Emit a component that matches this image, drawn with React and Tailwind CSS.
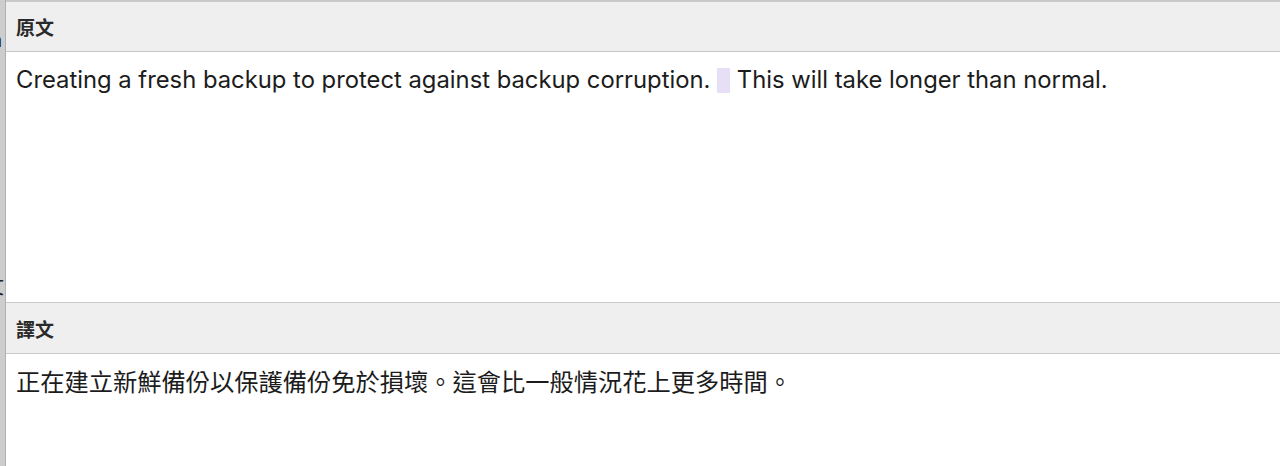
import React from 'react';

const latin = "font-['Inter','Noto_Sans_CJK_TC',sans-serif]";
const cjk = "font-['Noto_Sans_CJK_TC','Noto_Sans_CJK_SC',sans-serif]";

export default function App() {
    return (
        <div className="w-[1280px] h-[466px] flex overflow-hidden bg-white">
            {/* clipped neighbour pane on the left */}
            <div className={`w-[6px] h-full shrink-0 bg-[#cdcdcd] border-r border-[#b0b0b0] overflow-hidden ${latin}`}>
                <div className="-ml-[9px] mt-[30px] text-[20px] leading-none text-[#222]">a</div>
                <div className={`-ml-[16px] mt-[226px] text-[20px] leading-none text-[#222] ${cjk}`}>文</div>
                <div className={`-ml-[18px] mt-[30px] text-[18px] leading-none text-[#222] ${cjk}`}>盲</div>
            </div>

            <div className="flex-1 flex flex-col border-t-2 border-[#c9c9c9]">
                {/* source */}
                <div className="h-[50px] shrink-0 bg-[#efefef] border-b border-[#c8c8c8] flex items-center px-[10px]">
                    <span className={`text-[19px] font-bold text-[#2a2a2a] leading-none ${cjk}`}>原文</span>
                </div>
                <div className={`h-[250px] shrink-0 px-[10px] pt-[13px] text-[23.8px] leading-[30px] text-[#1c1c1c] ${latin}`}>
                    Creating a fresh backup to protect against backup corruption.{' '}
                    <span className="inline-block w-[13px] h-[25px] align-[-5px] bg-[#e6dff5]"></span>
                    {' '}This will take longer than normal.
                </div>

                {/* translation */}
                <div className="h-[52px] shrink-0 bg-[#efefef] border-y border-[#c8c8c8] flex items-center px-[10px]">
                    <span className={`text-[19px] font-bold text-[#2a2a2a] leading-none ${cjk}`}>譯文</span>
                </div>
                <div className={`flex-1 px-[10px] pt-[12px] text-[24.25px] leading-[30px] text-[#1c1c1c] ${cjk}`}>
                    正在建立新鮮備份以保護備份免於損壞。這會比一般情況花上更多時間。
                </div>
            </div>
        </div>
    );
}
